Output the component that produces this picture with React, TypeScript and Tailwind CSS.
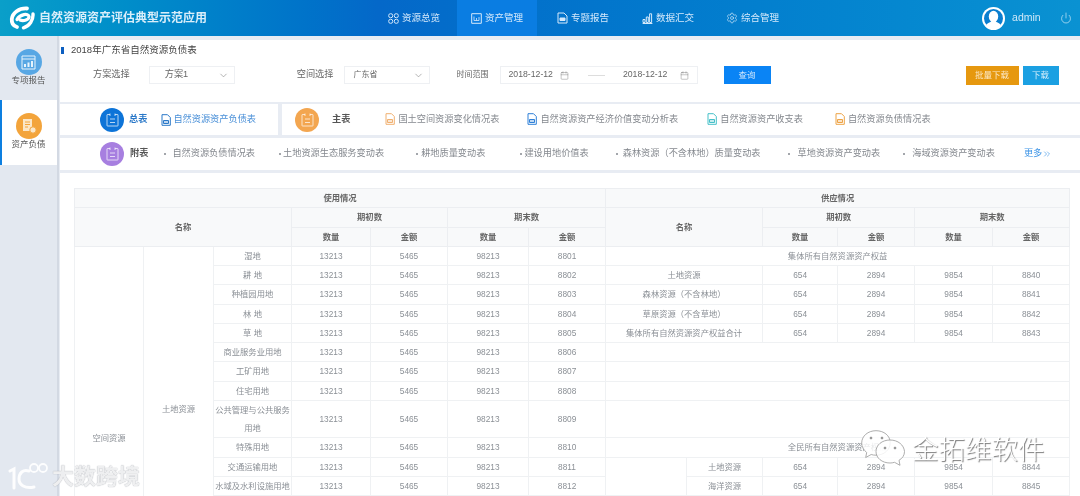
import { Calendar, ChevronDown, ChevronsRight, Power, Settings } from 'lucide-react';

// left column of the lower table, clipped by the window after the twelfth row
const leftRows = [
  ['湿地', '8801'],
  ['耕 地', '8802'],
  ['种植园用地', '8803'],
  ['林 地', '8804'],
  ['草 地', '8805'],
  ['商业服务业用地', '8806'],
  ['工矿用地', '8807'],
  ['住宅用地', '8808'],
  ['公共管理与公共服务用地', '8809'],
  ['特殊用地', '8810'],
  ['交通运输用地', '8811'],
  ['水域及水利设施用地', '8812'],
];

const widths = [69, 70, 78, 79, 77, 81, 77, 81, 76, 75, 77, 78, 77];

const mainItems = [
  { text: '国土空间资源变化情况表', color: '#f0b070', ml: 'ml-[35px]' },
  { text: '自然资源资产经济价值变动分析表', color: '#2f80d8', ml: 'ml-[28px]' },
  { text: '自然资源资产收支表', color: '#45c0c8', ml: 'ml-[29px]' },
  { text: '自然资源负债情况表', color: '#eda345', ml: 'ml-[32px]' },
];

const subItems = [
  { text: '自然资源负债情况表', ml: 'ml-[16px]', gap: 'gap-[6px]' },
  { text: '土地资源生态服务变动表', ml: 'ml-[24px]', gap: 'gap-[2px]' },
  { text: '耕地质量变动表', ml: 'ml-[32px]', gap: 'gap-[3px]' },
  { text: '建设用地价值表', ml: 'ml-[35px]', gap: 'gap-[2px]' },
  { text: '森林资源（不含林地）质量变动表', ml: 'ml-[27px]', gap: 'gap-[5px]' },
  { text: '草地资源资产变动表', ml: 'ml-[27px]', gap: 'gap-[8px]' },
  { text: '海域资源资产变动表', ml: 'ml-[23px]', gap: 'gap-[7px]' },
];

function Logo() {
  return (
    <svg width="26" height="24" viewBox="0 0 26 24" fill="none" stroke="#fff" strokeLinecap="round">
      <path d="M18 2.500C10 2 3.500 7 2.800 13C2.400 17 4.500 20 8 21" strokeWidth="3.800" />
      <path d="M8 13.500C11 8 19.500 7 20 10.500C20.400 13.500 14.500 15.500 11 14" strokeWidth="3.200" />
      <path d="M24 8C24.500 14 20.500 20 14.500 21.800" strokeWidth="3.400" />
    </svg>
  );
}

function FileIcon({ color }: { color: string }) {
  return (
    <svg width="10" height="12" viewBox="0 0 10 12" fill="none" stroke={color} className="shrink-0">
      <path d="M1 .7h5.500L9.300 3.500V11.300H1Z" />
      <path d="M2.500 6.500h5v3h-5Z" fill={color} fillOpacity=".3" />
    </svg>
  );
}

function BoardCircle({ bg }: { bg: string }) {
  return (
    <div className="flex h-[24px] w-[24px] shrink-0 items-center justify-center rounded-full" style={{ background: bg }}>
      <svg width="13" height="14" viewBox="0 0 13 14" fill="none" stroke="#fff" strokeOpacity=".7">
        <path d="M4 1.500H1.500a.5.5 0 0 0-.5.5v10.500a.5.5 0 0 0 .5.5h10a.5.5 0 0 0 .5-.5V2a.5.5 0 0 0-.5-.5H9" />
        <path d="M4 .5v2.500M9 .5v2.500" />
        <path d="M4 6h5M4 9.500h5" />
      </svg>
    </div>
  );
}

function SelectBox({ label, className }: { label: string; className: string }) {
  return (
    <div className={`flex h-[18px] w-[86px] items-center justify-between border border-[#eef0f3] pr-[5px] text-[#666] ${className}`}>
      <span>{label}</span>
      <ChevronDown size={11} strokeWidth={1.2} className="text-[#777]" />
    </div>
  );
}

function NavItem({ icon, label, className }: { icon: React.ReactNode; label: string; className: string }) {
  return (
    <div className={`flex h-full items-center gap-[3px] text-[9.500px] text-[#d5e9fb] ${className}`}>
      {icon}
      <span>{label}</span>
    </div>
  );
}

const th = 'border border-[#eceef1] bg-[#f8f9fa] p-0 text-center font-bold text-[#666]';
const td = 'border border-[#eff1f3] p-0 text-center font-normal text-[#8b9096]';

export default function App() {
  return (
    <div className="relative h-[496px] w-[1080px] overflow-hidden bg-[#e8ecf3] font-['Liberation_Sans','Noto_Sans_CJK_SC',sans-serif] text-[9.200px] blur-[0.35px]">
      <header className="flex h-[36px] items-center bg-gradient-to-r from-[#0a9fc9] via-[#0468c9] via-35% to-[#0a92d2] pl-[9px]">
        <Logo />
        <h1 className="ml-[4px] text-[12px] font-bold text-[#d9eefa]">自然资源资产评估典型示范应用</h1>
        <NavItem
          className="ml-[181px]"
          label="资源总览"
          icon={
            <svg width="11" height="11" viewBox="0 0 11 11" fill="none" stroke="#d5e9fb">
              <rect x=".7" y=".7" width="4" height="4" rx="1.800" />
              <rect x="6.300" y=".7" width="4" height="4" rx="1.800" />
              <rect x=".7" y="6.300" width="4" height="4" rx="1.800" />
              <rect x="6.300" y="6.300" width="4" height="4" rx="1.800" />
            </svg>
          }
        />
        <NavItem
          className="ml-[17px] w-[80px] justify-center bg-[#0a7de2]"
          label="资产管理"
          icon={
            <svg width="11" height="11" viewBox="0 0 11 11" fill="none" stroke="#d5e9fb">
              <path d="M.7.7h9.600v9.600H.7Z" />
              <path d="M3 3.500v4h5M5.500 5v2.500M8 4v3.500" strokeWidth=".8" />
            </svg>
          }
        />
        <NavItem
          className="ml-[20px]"
          label="专题报告"
          icon={
            <svg width="11" height="12" viewBox="0 0 11 12" fill="none" stroke="#d5e9fb">
              <path d="M1 1h6l3 3v7H1Z" />
              <path d="M3 6h5v2.500H3Z" fill="#d5e9fb" />
            </svg>
          }
        />
        <NavItem
          className="ml-[33px]"
          label="数据汇交"
          icon={
            <svg width="11" height="11" viewBox="0 0 11 11" fill="none" stroke="#d5e9fb">
              <path d="M.6 10.500h9.800" />
              <path d="M1 6.500h2v3H1ZM4.300 4h2v5.500h-2ZM7.600 .8h2v8.700h-2Z" />
            </svg>
          }
        />
        <NavItem className="ml-[32px]" label="综合管理" icon={<Settings size={12} strokeWidth={1.3} />} />
        <div className="ml-[203px] h-[23px] w-[23px] rounded-full bg-white">
          <svg width="23" height="23" viewBox="0 0 23 23">
            <circle cx="11.500" cy="11.500" r="9.500" fill="#0a7ecf" />
            <ellipse cx="11.500" cy="9.500" rx="4.700" ry="5.800" fill="#fff" />
            <path d="M4 18c2-2.500 5-2.500 5.500-4.500h4c.5 2 3.500 2 5.500 4.500-2 2.500-4.500 4-7.500 4S6 20.500 4 18Z" fill="#fff" />
          </svg>
        </div>
        <span className="ml-[7px] text-[10.500px] text-[#cfe8f8]">admin</span>
        <Power size={12} strokeWidth={1.3} className="ml-[19px] text-[#dceffa]" />
      </header>

      <div className="flex">
        <aside className="h-[460px] w-[59px] shrink-0 border-r-2 border-[#d3d9e3] bg-[#e3e8f0] pt-[2px]">
          <div className="flex h-[62px] flex-col items-center pt-[11px] text-[#555]">
            <div className="flex h-[26px] w-[26px] items-center justify-center rounded-full bg-[#58a7e4]">
              <svg width="15" height="15" viewBox="0 0 15 15" fill="none" stroke="#e6f3fc">
                <path d="M1 1h13v13H1ZM1 4h13" />
                <path d="M4 12V9M7.500 12V7.500M11 12V6" strokeWidth="2" />
              </svg>
            </div>
            <span className="mt-px text-[8.500px] leading-[9px]">专项报告</span>
          </div>
          <div className="flex h-[65px] flex-col items-center border-l-2 border-[#0d7fe0] bg-white pt-[13px] pr-[2px] text-[#555]">
            <div className="flex h-[26px] w-[26px] items-center justify-center rounded-full bg-[#f3a43b]">
              <svg width="16" height="16" viewBox="0 0 16 16" fill="#fbe7c8">
                <path d="M2 1h9v12H2Z" />
                <path d="M4 4h5M4 6.500h5M4 9h3" stroke="#f3a43b" />
                <circle cx="12" cy="12" r="3.200" stroke="#f3a43b" />
              </svg>
            </div>
            <span className="mt-px text-[8.500px] leading-[9px]">资产负债</span>
          </div>
        </aside>

        <main className="min-w-0 flex-1 pt-[4px] pl-px">
          <section className="h-[62px] bg-white pt-[5px]">
            <div className="flex h-[10px] items-center gap-[7px] pl-px text-[#444]">
              <div className="h-[7px] w-[3px] bg-[#0d5fc0]" />
              <span className="text-[9.500px]">2018年广东省自然资源负债表</span>
            </div>
            <div className="mt-[10px] flex h-[20px] items-center text-[#666]">
              <span className="ml-[33px]">方案选择</span>
              <div className="ml-[19px]">
                <SelectBox label="方案1" className="pl-[15px]" />
              </div>
              <span className="ml-[62px]">空间选择</span>
              <div className="ml-[10px]">
                <SelectBox label="广东省" className="pl-[9px] text-[8px]" />
              </div>
              <span className="ml-[27px] text-[8px]">时间范围</span>
              <div className="ml-[11px] flex h-[18px] w-[198px] items-center border border-[#eef0f3] pl-[8px] text-[8.700px] text-[#666]">
                <span>2018-12-12</span>
                <Calendar size={9} strokeWidth={1} className="ml-[7px] text-[#666]" />
                <div className="ml-[19px] h-px w-[17px] bg-[#ddd]" />
                <span className="ml-[18px]">2018-12-12</span>
                <Calendar size={9} strokeWidth={1} className="ml-[13px] text-[#666]" />
              </div>
              <button className="ml-[26px] h-[18px] w-[47px] bg-[#0a84f5] text-[8.500px] text-[#cfe6fb]">查询</button>
              <button className="ml-[195px] h-[19px] w-[53px] bg-[#e6980f] text-[8.500px] text-[#fbe8c8]">批量下载</button>
              <button className="ml-[4px] h-[19px] w-[36px] bg-[#1ba0e2] text-[8.500px] text-[#d5eefb]">下载</button>
            </div>
          </section>

          <div className="mt-[2px] flex h-[31px] gap-[4px]">
            <section className="flex w-[218px] items-center whitespace-nowrap bg-white pl-[40px]">
              <BoardCircle bg="#0d74d8" />
              <span className="ml-[5px] font-bold text-[#2a78c8]">总表</span>
              <div className="ml-[14px]">
                <FileIcon color="#2a78c8" />
              </div>
              <span className="ml-[2px] text-[#4a90d8]">自然资源资产负债表</span>
            </section>
            <section className="flex flex-1 items-center whitespace-nowrap bg-white pl-[13px] text-[#85898f]">
              <BoardCircle bg="#f3a650" />
              <span className="ml-[13px] font-bold text-[#555]">主表</span>
              {mainItems.map((item) => (
                <div key={item.text} className={`flex items-center gap-[3px] ${item.ml}`}>
                  <FileIcon color={item.color} />
                  <span>{item.text}</span>
                </div>
              ))}
            </section>
          </div>

          <section className="mt-[3px] flex h-[32px] items-center whitespace-nowrap bg-white pl-[40px] text-[#85898f]">
            <BoardCircle bg="#a77fe0" />
            <span className="ml-[6px] font-bold text-[#555]">附表</span>
            {subItems.map((item) => (
              <div key={item.text} className={`flex items-center ${item.ml} ${item.gap}`}>
                <div className="h-[2px] w-[2px] rounded-full bg-[#85898f]" />
                <span>{item.text}</span>
              </div>
            ))}
            <span className="ml-[29px] flex items-center text-[#3d94e6]">
              更多
              <ChevronsRight size={10} strokeWidth={1.500} />
            </span>
          </section>

          <section className="mt-[3px] h-[330px] bg-white pt-[15px] pl-[14px]">
            <table className="w-[995px] table-fixed border-collapse text-[8.300px] leading-[18.250px]">
              <colgroup>
                {widths.map((w, i) => (
                  <col key={i} style={{ width: w }} />
                ))}
              </colgroup>
              <thead>
                <tr>
                  <th colSpan={7} className={th}>使用情况</th>
                  <th colSpan={6} className={th}>供应情况</th>
                </tr>
                <tr>
                  <th colSpan={3} rowSpan={2} className={th}>名称</th>
                  <th colSpan={2} className={th}>期初数</th>
                  <th colSpan={2} className={th}>期末数</th>
                  <th colSpan={2} rowSpan={2} className={th}>名称</th>
                  <th colSpan={2} className={th}>期初数</th>
                  <th colSpan={2} className={th}>期末数</th>
                </tr>
                <tr>
                  {['数量', '金额', '数量', '金额'].map((t, i) => (
                    <th key={i} className={th}>{t}</th>
                  ))}
                  {['数量', '金额', '数量', '金额'].map((t, i) => (
                    <th key={i} className={th}>{t}</th>
                  ))}
                </tr>
              </thead>
              <tbody>
                {leftRows.map(([name, amount], i) => (
                  <tr key={amount}>
                    {i === 0 && <td rowSpan={19} className={td}>空间资源</td>}
                    {i === 0 && <td rowSpan={16} className={td}>土地资源</td>}
                    <td className={td}>{name}</td>
                    <td className={td}>13213</td>
                    <td className={td}>5465</td>
                    <td className={td}>98213</td>
                    <td className={td}>{amount}</td>
                    <RightCells index={i} />
                  </tr>
                ))}
                {Array.from({ length: 7 }, (_, i) => (
                  <tr key={i} className="h-[19.250px]">
                    <td colSpan={i < 4 ? 11 : 12} className={td} />
                  </tr>
                ))}
              </tbody>
            </table>
          </section>
        </main>
      </div>

      {/* watermarks pasted over the screenshot */}
      <div className="absolute top-[462px] left-[8px] flex items-center">
        <svg width="42" height="30" viewBox="0 0 42 30" fill="none" stroke="#fff" strokeOpacity=".9" strokeLinecap="round">
          <path d="M2 9l4-2v19" strokeWidth="3" />
          <path d="M21 9C15 7 11 11 11 17s6 10 15 8" strokeWidth="3" />
          <circle cx="26" cy="6" r="4" strokeWidth="1.800" />
          <circle cx="35" cy="6" r="4" strokeWidth="1.800" />
        </svg>
        <span className="ml-[2px] text-[22px] leading-none font-bold text-white/85 [text-shadow:0_0_1px_#8a8f98]">大数跨境</span>
      </div>
      <div className="absolute top-[430px] left-[861px] flex items-center">
        <svg width="46" height="40" viewBox="0 0 46 40" stroke="#999" strokeWidth=".8">
          <path d="M15 .7C7 .7 .7 6 .7 13c0 4 2 7 5 9.500l-1 5 5.500-3c1.500.5 3 .7 5 .7 8 0 14-5.500 14-12.500S23 .7 15 .7Z" fill="#fff" fillOpacity=".8" />
          <circle cx="10" cy="8" r="1" fill="#777" />
          <circle cx="21" cy="8" r="1" fill="#777" />
          <path d="M29 10c-8 0-14 5-14 11.500S21 33 29 33c1.500 0 3-.2 4.500-.7l5.500 3-1-5c3.500-2 5.500-5 5.500-8.800C43 15 37 10 29 10Z" fill="#fff" fillOpacity=".85" />
          <circle cx="24" cy="18" r="1" fill="#777" />
          <circle cx="34" cy="18" r="1" fill="#777" />
        </svg>
        <span className="ml-[5px] text-[26.500px] leading-none font-light text-white [text-shadow:1px_1px_1px_#777]">金拓维软件</span>
      </div>
    </div>
  );
}

function RightCells({ index }: { index: number }) {
  const named: Record<number, [string, string]> = {
    1: ['土地资源', '8840'],
    2: ['森林资源（不含林地）', '8841'],
    3: ['草原资源（不含草地）', '8842'],
    4: ['集体所有自然资源资产权益合计', '8843'],
  };
  const sea: Record<number, [string, string]> = {
    10: ['土地资源', '8844'],
    11: ['海洋资源', '8845'],
  };
  if (index === 0) return <td colSpan={6} className={td}>集体所有自然资源资产权益</td>;
  if (index === 9) return <td colSpan={6} className={td}>全民所有自然资源资产权益</td>;
  const row = named[index] ?? sea[index];
  if (!row) return <td colSpan={6} className={`${td} h-[19.250px]`} />;
  return (
    <>
      {named[index] ? (
        <td colSpan={2} className={td}>{row[0]}</td>
      ) : (
        <>
          {index === 10 && <td rowSpan={2} className={td} />}
          <td className={td}>{row[0]}</td>
        </>
      )}
      <td className={td}>654</td>
      <td className={td}>2894</td>
      <td className={td}>9854</td>
      <td className={td}>{row[1]}</td>
    </>
  );
}
